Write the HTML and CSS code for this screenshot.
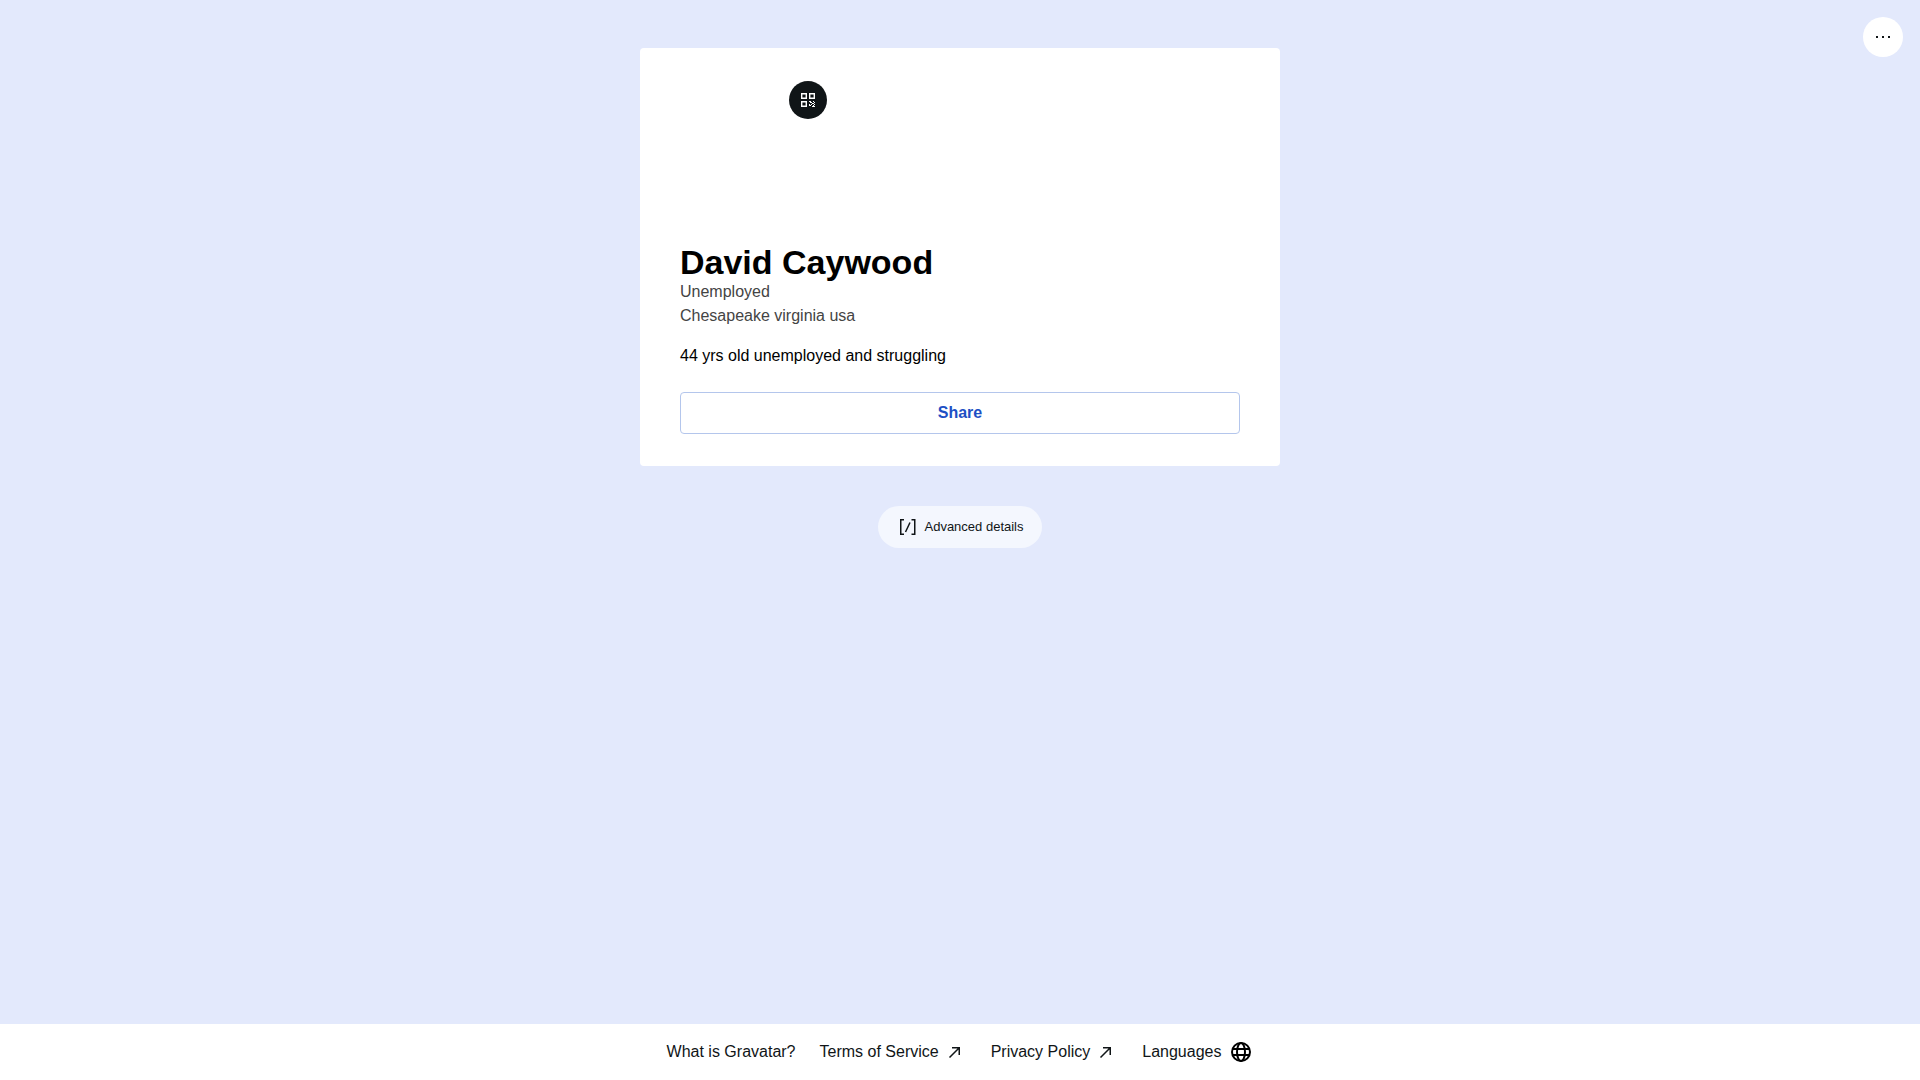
FILE: index.html
```
<!DOCTYPE html>
<html lang="en">
<head>
  <meta charset="utf-8">
  <title>David Caywood - Gravatar Profile</title>
  <meta name="viewport" content="width=device-width, initial-scale=1.0">
  <link rel="stylesheet" href="styles.css">
</head>
<body>
  <button class="more-button" type="button" aria-label="More options">
    <svg width="24" height="24" viewBox="0 0 24 24" fill="currentColor">
      <path d="M5 11h2v2H5zM11 11h2v2h-2zM17 11h2v2h-2z"/>
    </svg>
  </button>

  <main class="content">
    <section class="card">
      <div class="avatar">
        <button class="qr-button" type="button" aria-label="Show QR code">
          <svg width="14" height="14" viewBox="0 0 14 14" fill="currentColor" fill-rule="evenodd">
            <path d="M0 0h6v6H0zM1.400 1.400v3.200h3.200V1.400z"/>
            <path d="M8 0h6v6H8zM9.400 1.400v3.200h3.200V1.400z"/>
            <path d="M0 8h6v6H0zM1.400 9.400v3.200h3.200V9.400z"/>
            <path d="M8 8h2v1H8zM12 8h1v1h-1zM13 9h1v1h-1zM9 9h2v1H9zM11 10h2v1h-2zM10 11h1v1h-1zM8 11h1v2H8zM9 12h1v1H9zM13 11h1v1h-1zM11 13h3v1h-3zM12 12h1v1h-1z"/>
          </svg>
        </button>
      </div>

      <h1>David Caywood</h1>
      <p class="meta">Unemployed</p>
      <p class="meta">Chesapeake virginia usa</p>
      <p class="bio">44 yrs old unemployed and struggling</p>
      <button class="share-button" type="button">Share</button>
    </section>

    <button class="details-button" type="button">
      <svg width="24" height="24" viewBox="0 0 24 24" fill="none" stroke="currentColor" stroke-width="1.5">
        <path d="M8 4.750H4.750v14.500H8M15.500 4.750h3.250v14.500H15.500M14 7.500l-4.500 9.500"/>
      </svg>
      Advanced details
    </button>
  </main>

  <footer class="footer">
    <a href="#">What is Gravatar?</a>
    <a href="#">Terms of Service
      <svg width="24" height="24" viewBox="0 0 24 24" fill="none" stroke="currentColor" stroke-width="1.5">
        <path d="M9 7.750h7.250V15M16 8L6.500 17.500"/>
      </svg>
    </a>
    <a href="#">Privacy Policy
      <svg width="24" height="24" viewBox="0 0 24 24" fill="none" stroke="currentColor" stroke-width="1.5">
        <path d="M9 7.750h7.250V15M16 8L6.500 17.500"/>
      </svg>
    </a>
    <button class="languages-button" type="button">Languages
      <svg width="24" height="24" viewBox="0 0 24 24" fill="none" stroke="#000" stroke-width="2">
        <circle cx="12" cy="12" r="9"/>
        <ellipse cx="12" cy="12" rx="4" ry="9"/>
        <path d="M3.500 9h17M3.500 15h17"/>
      </svg>
    </button>
  </footer>
</body>
</html>
```

FILE: styles.css
```
* {
  box-sizing: border-box;
}
body {
  display: flex;
  flex-direction: column;
  min-height: 100vh;
  margin: 0;
  background-color: #e3e9fc;
  color: #000;
  font-family: "Liberation Sans", Arial, sans-serif;
  font-size: 16px;
  line-height: 24px;
}
h1, p {
  margin: 0;
}
button {
  padding: 0;
  border: 0;
  background: none;
  color: inherit;
  font: inherit;
  cursor: pointer;
}
svg {
  flex-shrink: 0;
}
.more-button {
  position: absolute;
  top: 17px;
  right: 17px;
  display: flex;
  align-items: center;
  justify-content: center;
  width: 40px;
  height: 40px;
  border-radius: 50%;
  background-color: #fff;
  color: #101517;
}
.content {
  flex: 1;
  display: flex;
  flex-direction: column;
  align-items: center;
  gap: 40px;
  padding: 48px 0;
}
.card {
  width: 100%;
  max-width: 640px;
  padding: 32px 40px;
  border-radius: 4px;
  background-color: #fff;
}
.avatar {
  position: relative;
  width: 128px;
  height: 128px;
  margin-bottom: 36px;
}
.qr-button {
  position: absolute;
  top: 1px;
  right: -19px;
  display: flex;
  align-items: center;
  justify-content: center;
  width: 38px;
  height: 38px;
  border-radius: 50%;
  background-color: #101517;
  color: #fff;
}
h1 {
  font-size: 34px;
  line-height: 36px;
}
.meta {
  color: #444;
}
.bio {
  margin-top: 16px;
}
.share-button {
  width: 100%;
  height: 42px;
  margin-top: 24px;
  border: 1px solid #b4c6ec;
  border-radius: 4px;
  color: #1d4fc4;
  font-weight: bold;
}
.details-button {
  display: flex;
  align-items: center;
  gap: 4px;
  height: 42px;
  padding: 0 18px;
  border-radius: 21px;
  background-color: #f4f7fe;
  color: #101517;
  font-size: 13px;
}
.footer {
  display: flex;
  flex-wrap: wrap;
  align-items: center;
  justify-content: center;
  gap: 24px;
  padding: 16px;
  background-color: #fff;
  color: #101517;
}
.footer a,
.languages-button {
  display: flex;
  align-items: center;
  gap: 4px;
  color: inherit;
  text-decoration: none;
}
.languages-button {
  gap: 8px;
}
```
